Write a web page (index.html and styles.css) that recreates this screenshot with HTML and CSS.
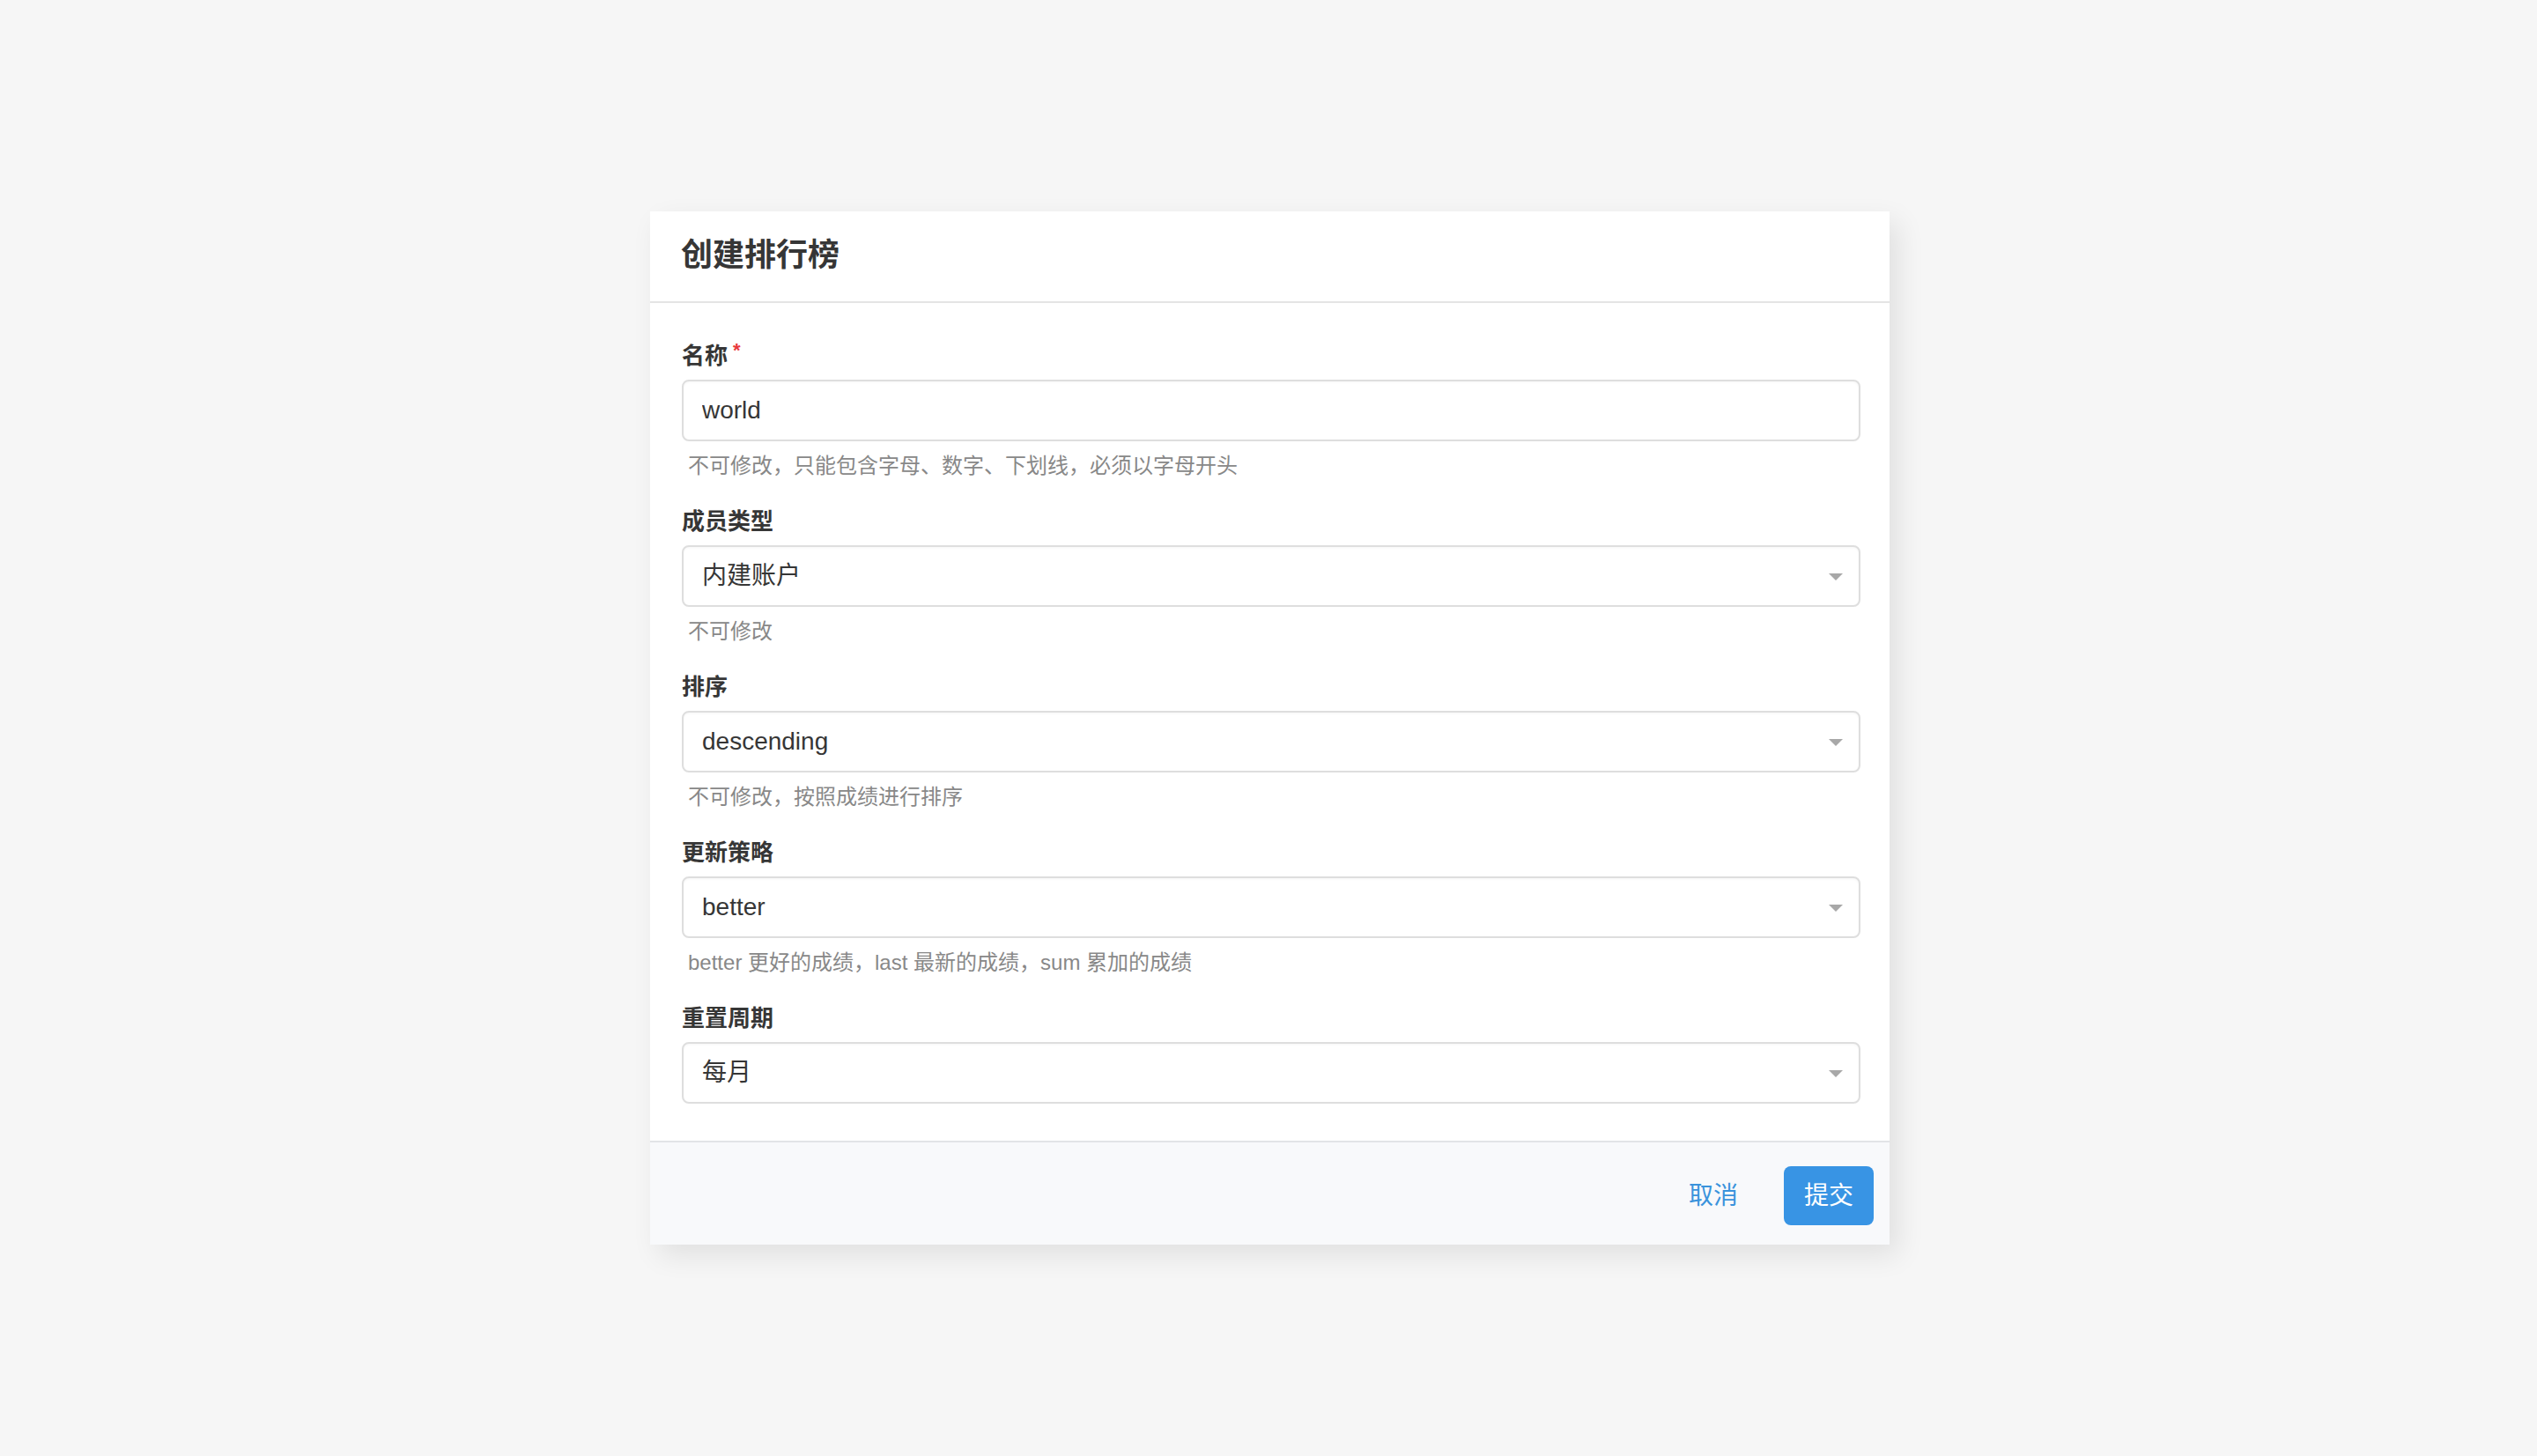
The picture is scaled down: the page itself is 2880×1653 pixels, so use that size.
FILE: index.html
```html
<!DOCTYPE html>
<html lang="zh-CN">
<head>
<meta charset="utf-8">
<title>创建排行榜</title>
<link rel="stylesheet" href="styles.css">
</head>
<body>
<div class="page">
  <div class="modal">
    <header class="modal-head">
      <h1 class="modal-title">创建排行榜</h1>
    </header>
    <section class="modal-body">
      <div class="field">
        <label class="label">名称<span class="req">*</span></label>
        <div class="control">
          <input class="input" type="text" value="world">
        </div>
        <p class="help">不可修改，只能包含字母、数字、下划线，必须以字母开头</p>
      </div>
      <div class="field">
        <label class="label">成员类型</label>
        <div class="select">
          <span class="select-value">内建账户</span>
          <svg class="arrow" width="16" height="8" viewBox="0 0 16 8"><path d="M0 0 L16 0 L8 8 Z" fill="#a8a8a8"/></svg>
        </div>
        <p class="help">不可修改</p>
      </div>
      <div class="field">
        <label class="label">排序</label>
        <div class="select">
          <span class="select-value">descending</span>
          <svg class="arrow" width="16" height="8" viewBox="0 0 16 8"><path d="M0 0 L16 0 L8 8 Z" fill="#a8a8a8"/></svg>
        </div>
        <p class="help">不可修改，按照成绩进行排序</p>
      </div>
      <div class="field">
        <label class="label">更新策略</label>
        <div class="select">
          <span class="select-value">better</span>
          <svg class="arrow" width="16" height="8" viewBox="0 0 16 8"><path d="M0 0 L16 0 L8 8 Z" fill="#a8a8a8"/></svg>
        </div>
        <p class="help">better 更好的成绩，last 最新的成绩，sum 累加的成绩</p>
      </div>
      <div class="field last">
        <label class="label">重置周期</label>
        <div class="select">
          <span class="select-value">每月</span>
          <svg class="arrow" width="16" height="8" viewBox="0 0 16 8"><path d="M0 0 L16 0 L8 8 Z" fill="#a8a8a8"/></svg>
        </div>
      </div>
    </section>
    <footer class="modal-foot">
      <button class="btn btn-text" type="button">取消</button>
      <button class="btn btn-primary" type="button">提交</button>
    </footer>
  </div>
</div>
</body>
</html>
```

FILE: styles.css
```css
* {
  box-sizing: border-box;
}

html, body {
  margin: 0;
  padding: 0;
  height: 100%;
}

body {
  background: #f6f6f6;
  font-family: "Liberation Sans", "Noto Sans CJK SC", sans-serif;
  color: #363636;
}

.page {
  height: 100vh;
  display: flex;
  align-items: center;
  justify-content: center;
  padding-left: 3px;
}

.modal {
  width: 1407px;
  background: #ffffff;
  box-shadow: 10px 12px 30px rgba(0, 0, 0, 0.09);
  display: flex;
  flex-direction: column;
}

.modal-head {
  height: 104px;
  border-bottom: 2px solid #e4e4e4;
  padding: 0 35px;
  display: flex;
  align-items: center;
}

.modal-title {
  margin: 0;
  font-size: 36px;
  line-height: 48px;
  font-weight: 700;
  color: #363636;
  padding-bottom: 3px;
}

.modal-body {
  padding: 42px 33px 42px 36px;
}

.field {
  margin-bottom: 27px;
}

.field.last {
  margin-bottom: 0;
}

.label {
  display: block;
  font-size: 26px;
  line-height: 36px;
  font-weight: 700;
  color: #363636;
  margin-bottom: 9px;
}

.req {
  color: #e8383d;
  font-size: 22px;
  margin-left: 6px;
  vertical-align: 8px;
  line-height: 1;
}

.input,
.select {
  width: 100%;
  height: 70px;
  border: 2px solid #dedede;
  border-radius: 8px;
  background: #ffffff;
  box-shadow: inset 0 1px 3px rgba(10, 10, 10, 0.04);
  font-family: "Liberation Sans", "Noto Sans CJK SC", sans-serif;
  font-size: 28px;
  color: #363636;
  padding: 0 18px 0 21px;
}

.input {
  display: block;
  outline: none;
}

.select {
  display: flex;
  align-items: center;
  justify-content: space-between;
}

.select-value {
  line-height: 40px;
}

.arrow {
  display: block;
  flex: none;
  margin-top: 2px;
}

.help {
  margin: 10px 0 0 0;
  padding-left: 7px;
  font-size: 24px;
  line-height: 36px;
  color: #888888;
}

.modal-foot {
  border-top: 2px solid #e2e4e7;
  background: #f8f9fb;
  padding: 27px 18px 22px;
  display: flex;
  justify-content: flex-end;
  align-items: center;
  gap: 29px;
}

.btn {
  height: 67px;
  padding: 0 23px;
  border: none;
  border-radius: 8px;
  font-family: "Liberation Sans", "Noto Sans CJK SC", sans-serif;
  font-size: 28px;
  line-height: 67px;
  cursor: pointer;
}

.btn-text {
  background: transparent;
  color: #3a93dc;
}

.btn-primary {
  background: #3894e4;
  color: #ffffff;
}
```
